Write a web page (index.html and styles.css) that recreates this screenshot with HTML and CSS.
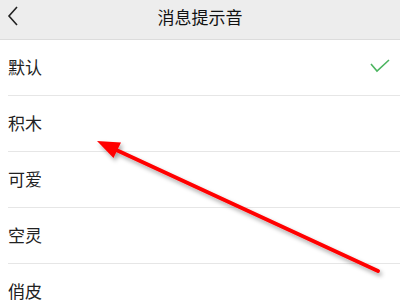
FILE: index.html
```html
<!DOCTYPE html>
<html lang="zh">
<head>
<meta charset="utf-8">
<title>消息提示音</title>
<link rel="stylesheet" href="styles.css">
</head>
<body>
<div class="page">
  <header class="bar">
    <svg class="back" width="12" height="20" viewBox="0 0 12 20"><path d="M10 1 L2 10 L10 19" fill="none" stroke="#222" stroke-width="1.6"/></svg>
    <h1 class="title">消息提示音</h1>
  </header>
  <ul class="list">
    <li class="row"><span>默认</span><svg class="check" width="20" height="14" viewBox="0 0 20 14"><path d="M1 5 L7 12 L19 1" fill="none" stroke="#4cb560" stroke-width="1.6"/></svg></li>
    <li class="row"><span>积木</span></li>
    <li class="row"><span>可爱</span></li>
    <li class="row"><span>空灵</span></li>
    <li class="row"><span>俏皮</span></li>
  </ul>
  <svg class="arrow" width="400" height="300" viewBox="0 0 400 300">
    <defs>
      <filter id="sh" x="-10%" y="-10%" width="130%" height="130%">
        <feDropShadow dx="2" dy="3" stdDeviation="2" flood-color="#000" flood-opacity="0.35"/>
      </filter>
    </defs>
    <g filter="url(#sh)">
      <line x1="378" y1="271" x2="112" y2="148" stroke="#ff0000" stroke-width="4" stroke-linecap="round"/>
      <polygon points="97,141 121,142.5 113.5,158" fill="#ff0000"/>
    </g>
  </svg>
</div>
</body>
</html>
```
FILE: styles.css
```css
* { box-sizing: border-box; }
html, body { margin: 0; padding: 0; }
body {
  width: 400px;
  height: 300px;
  overflow: hidden;
  background: #fff;
  font-family: "Noto Sans CJK SC", "Noto Sans", sans-serif;
}
.page { position: relative; width: 400px; height: 300px; overflow: hidden; }
.bar {
  height: 40px;
  background: #ededed;
  border-bottom: 1px solid #dcdcdc;
  display: flex;
  align-items: center;
  justify-content: center;
  position: relative;
}
.back { position: absolute; left: 7px; top: 6px; }
.title {
  margin: 0;
  font-size: 17px;
  font-weight: 400;
  color: #111;
  line-height: 1;
  margin-top: -6px;
}
.list { list-style: none; margin: 0; padding: 0 0 0 8px; }
.row {
  height: 56px;
  border-bottom: 1px solid #e6e6e6;
  display: flex;
  align-items: center;
  justify-content: space-between;
  padding-right: 10px;
  font-size: 17px;
  color: #222;
}
.row span { margin-top: -2px; }
.check { margin-top: -3px; }
.arrow { position: absolute; left: 0; top: 0; pointer-events: none; }
```
